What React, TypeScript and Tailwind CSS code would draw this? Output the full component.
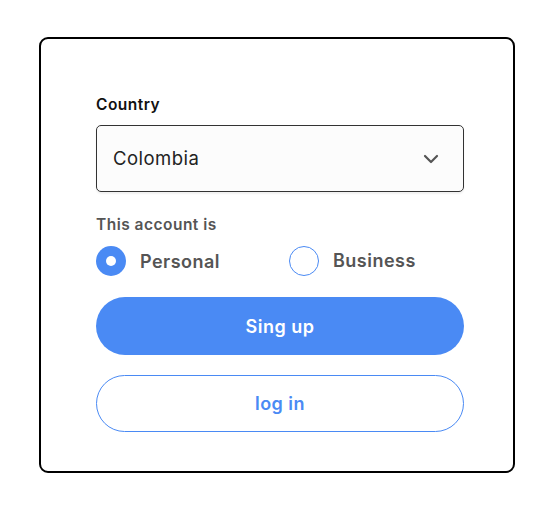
import { ChevronDown } from "lucide-react";

export default function App() {
  return (
    <div className="min-h-[510px] w-[554px] bg-white pl-[39px] pt-[37px] font-['Inter','Noto_Sans',sans-serif] tracking-[0.03em]">
      <div className="flex w-[476px] flex-col rounded-[9px] border-2 border-black pb-[39px] pl-[55px] pr-[49px] pt-[56px]">
        <label className="text-[15.5px] font-semibold leading-5 text-[#111]">Country</label>
        <div className="mt-[10px] flex h-[67px] w-[368px] items-center justify-between rounded-[5px] border border-[#333] bg-[#fcfcfc] pl-[16px] pr-[20px] shadow-[0_2px_2px_rgba(0,0,0,0.06)]">
          <span className="text-[18.5px] text-[#222]">Colombia</span>
          <ChevronDown className="size-[24px] text-[#555]" strokeWidth={2.2} />
        </div>

        <p className="mt-[23px] text-[15.5px] font-semibold leading-5 text-[#555]">This account is</p>
        <div className="mt-[11px] flex h-[30px] items-center">
          <div className="flex w-[193px] items-center gap-[14px]">
            <span className="flex size-[30px] items-center justify-center rounded-full bg-[#4a8af4]">
              <span className="size-[10px] rounded-full bg-white" />
            </span>
            <span className="text-[18px] font-semibold text-[#555]">Personal</span>
          </div>
          <div className="flex items-center gap-[14px]">
            <span className="size-[30px] rounded-full border border-[#4a8af4]" />
            <span className="-mt-[2px] text-[18px] font-semibold text-[#555]">Business</span>
          </div>
        </div>

        <button className="mt-[21px] h-[58px] w-[368px] rounded-full bg-[#4a8af4] text-[18px] font-semibold text-white">
          Sing up
        </button>
        <button className="mt-[20px] h-[57px] w-[368px] rounded-full border border-[#4a8af4] bg-white text-[18px] font-semibold text-[#4a8af4]">
          log in
        </button>
      </div>
    </div>
  );
}
